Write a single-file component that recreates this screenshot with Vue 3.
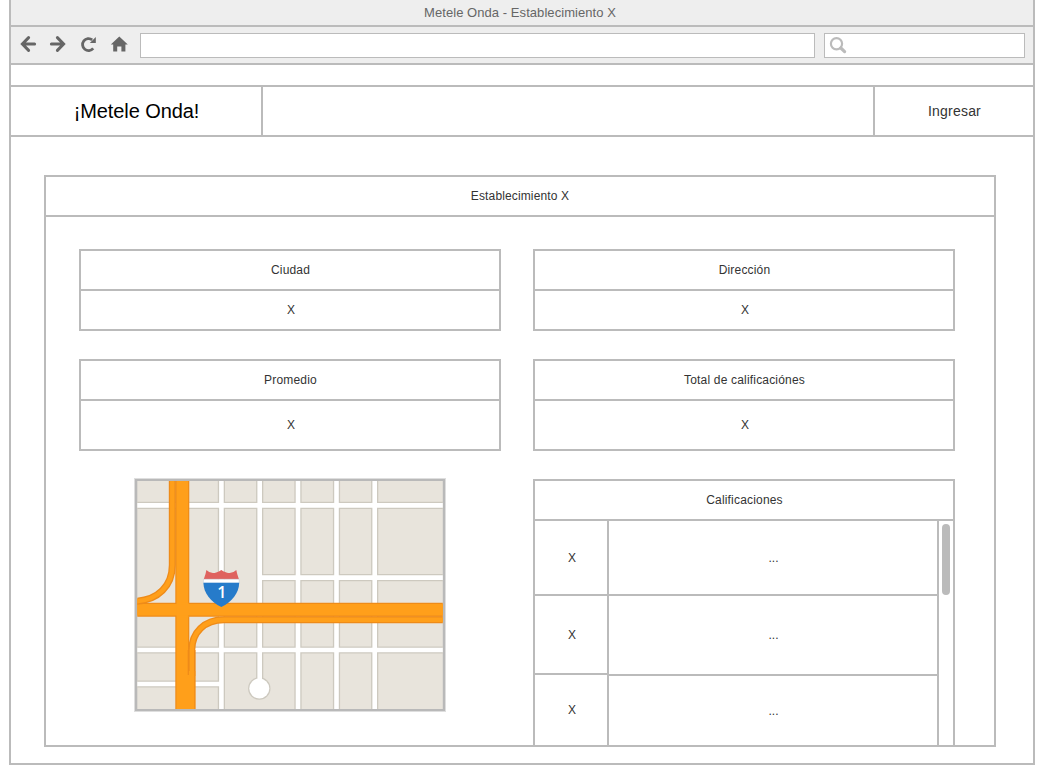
<script setup>
const cards = [
  { title: 'Ciudad', value: 'X' },
  { title: 'Dirección', value: 'X' },
  { title: 'Promedio', value: 'X', tall: true },
  { title: 'Total de calificaciónes', value: 'X', tall: true },
]
const scores = ['X', 'X', 'X']
const comments = ['...', '...', '...']
const streets =
  'M221.4 480V710 M259.7 480V688 M298 480V710 M336.5 480V710 M374.7 480V710 M136 505.4H444 M259.7 577.6H444 M136 650H444 M136 684H221.4'
const ramps =
  'M136 601.3C158 600 172.3 586 172.3 565V479 M191.8 676V650C191.8 633 204 619.8 224 619.8H444'
const mains = 'M182.3 479V710 M136 609.8H444'
</script>

<template>
  <div class="window">
    <div class="titlebar"><span class="title">Metele Onda - Establecimiento X</span></div>
    <div class="toolbar">
      <svg class="nav" width="112" height="20" viewBox="19 34 112 20">
        <g fill="none" stroke="#666" stroke-width="3">
          <path d="M28.6 37.6L22.4 44L28.6 50.4M22.8 44H34.6" stroke-linecap="round" />
          <path d="M57.4 37.6L63.6 44L57.4 50.4M63 44H51.4" stroke-linecap="round" />
          <path d="M93.2 48.4A6 6 0 1 1 92.2 39.8" stroke-width="2.8" />
        </g>
        <g fill="#666">
          <path d="M95.8 37V43H89.8Z" />
          <path d="M119.3 36.5L127.8 44.6H125.4V51.6H121.4V46.4H117.2V51.6H113.2V44.6H110.8Z" />
        </g>
      </svg>
      <div class="address"></div>
      <div class="search">
        <svg width="18" height="18" viewBox="829 36 18 18" fill="none" stroke="#bbb">
          <circle cx="836.5" cy="43.8" r="5.6" stroke-width="2.2" />
          <path d="M840.8 48L844.6 51.6" stroke-width="3.2" stroke-linecap="round" />
        </svg>
      </div>
    </div>
    <div class="spacer"></div>
    <header class="header">
      <div class="brand"><span>¡Metele Onda!</span></div>
      <div class="middle"></div>
      <div class="login"><span>Ingresar</span></div>
    </header>
    <main class="panel">
      <div class="panel-title">Establecimiento X</div>
      <div class="grid">
        <section v-for="c in cards" :key="c.title" class="card" :class="{ tall: c.tall }">
          <div class="card-title">{{ c.title }}</div>
          <div class="card-value">{{ c.value }}</div>
        </section>
        <svg class="map" width="312" height="234" viewBox="134 478 312 234">
          <rect x="134" y="478" width="312" height="234" fill="#dedede" />
          <rect x="135" y="479" width="310" height="232" fill="#b9b9b9" />
          <svg x="137.3" y="481" width="305.5" height="228" viewBox="137.3 481 305.5 228">
            <rect x="137" y="480" width="307" height="230" fill="#e8e4dc" />
            <g fill="none">
              <path :d="streets" stroke="#cdc9bf" stroke-width="7.2" />
              <circle cx="259.3" cy="688.5" r="11.2" fill="#cdc9bf" />
              <path :d="streets" stroke="#fff" stroke-width="4.6" />
              <circle cx="259.3" cy="688.5" r="10" fill="#fff" />
              <path :d="mains" stroke="#ee8b19" stroke-width="14" />
              <path :d="mains" stroke="#ff9f1a" stroke-width="11.6" />
              <path :d="ramps" stroke="#ee8b19" stroke-width="7" />
              <path :d="ramps" stroke="#ff9f1a" stroke-width="4.4" />
              <path d="M188 671V710H195.3V671Z" fill="#ff9f1a" />
              <path d="M188.3 650V675M194.9 650V710" stroke="#ee8b19" stroke-width="1.2" />
              <path d="M176.8 604.4H188V615.2H176.8Z" fill="#ff9f1a" />
              <path d="M181 603.5H188.6M181 616.5H188.6" stroke="#ff9f1a" stroke-width="1.6" />
            </g>
          </svg>
          <path d="M206.4 570Q211 574.6 216.2 572.4Q219 571.6 221.3 570Q223.6 571.6 226.4 572.4Q231.6 574.6 236.3 570Q237 574 239 579.6H203.7Q205.8 574 206.4 570Z" fill="#df625f" />
          <path d="M203.6 579.2H239L239.2 583H203.4Z" fill="#fff" stroke="#b9c9dc" stroke-width=".4" />
          <path d="M203.4 582.7H239.2C239 593 232 601.6 221.3 607C210.6 601.6 203.6 593 203.4 582.7Z" fill="#267bca" />
          <text x="221.8" y="598" text-anchor="middle" class="route">1</text>
        </svg>
        <section class="ratings">
          <div class="card-title">Calificaciones</div>
          <div class="rows">
            <div class="col scores"><div v-for="(s, i) in scores" :key="i" class="cell">{{ s }}</div></div>
            <div class="col comments"><div v-for="(s, i) in comments" :key="i" class="cell">{{ s }}</div></div>
            <div class="track"><div class="thumb"></div></div>
          </div>
        </section>
      </div>
    </main>
  </div>
</template>

<style>
body { background: #fff; overflow: hidden; }
</style>

<style scoped>
* { box-sizing: border-box; }
.window {
  width: 1026px; height: 765px; margin-left: 9px;
  border: 2px solid #bbb; border-top: 0; background: #fff;
  font: 12px/14px "Liberation Sans", Arial, sans-serif; color: #333;
}
.titlebar {
  height: 27px; background: #eee; border-bottom: 2px solid #bbb;
  display: flex; align-items: center; justify-content: center; padding-right: 4px;
  font-size: 13px; line-height: 15px; color: #666;
}
.title { letter-spacing: .06px; }
.toolbar {
  height: 38px; background: #eee; border-bottom: 2px solid #bbb;
  display: flex; align-items: center; padding: 0 8px;
}
.nav { flex: none; margin-right: 9px; margin-top: -2px; }
.address { width: 675px; height: 25px; border: 1px solid #bbb; background: #fff; }
.search {
  width: 201px; height: 25px; margin-left: 9px; border: 1px solid #bbb; background: #fff;
  display: flex; padding: 2px 0 0 4px;
}
.spacer { height: 20px; }
.header { display: flex; height: 52px; border: solid #bbb; border-width: 2px 0; }
.brand { width: 252px; border-right: 2px solid #bbb; font-size: 20px; line-height: 23px; color: #000; letter-spacing: -.08px; }
.middle { flex: 1; }
.login { width: 160px; border-left: 2px solid #bbb; font-size: 14px; line-height: 16px; letter-spacing: .2px; }
.brand, .login { display: flex; align-items: center; justify-content: center; padding-left: 1px; }
.panel { width: 952px; height: 572px; margin: 38px 0 0 33px; border: 2px solid #bbb; }
.panel-title { height: 40px; border-bottom: 2px solid #bbb; display: flex; align-items: center; justify-content: center; letter-spacing: .13px; }
.grid {
  display: grid; grid-template-columns: 422px 422px; column-gap: 32px;
  grid-template-rows: 82px 92px 266px; row-gap: 28px; padding: 32px 0 0 33px;
}
.card { height: 82px; border: 2px solid #bbb; }
.card.tall { height: 92px; }
.card-title { height: 40px; border-bottom: 2px solid #bbb; letter-spacing: .18px; padding-left: 1px; }
.card-value { height: 38px; padding-left: 2px; }
.tall .card-value { height: 48px; }
.card-title, .card-value, .cell { display: flex; align-items: center; justify-content: center; }
.map { display: block; margin: -1px 0 0 55px; }
.route { font: 600 16px "Open Sans", sans-serif; fill: #fff; }
.ratings { height: 266px; border: 2px solid #bbb; border-bottom: 0; }
.rows { display: flex; height: 224px; }
.scores { width: 74px; border-right: 2px solid #bbb; }
.comments { width: 330px; border-right: 2px solid #bbb; }
.cell { height: 75px; border-bottom: 2px solid #bbb; padding-left: 1px; }
.scores .cell { padding-left: 2px; }
.cell:nth-child(2) { height: 79px; }
.comments .cell:nth-child(2) { height: 80px; }
.cell:nth-child(3) { height: 70px; border-bottom: 0; }
.track { padding: 3px 0 0 3px; }
.thumb { width: 8px; height: 71px; border-radius: 4px; background: #bbb; }
</style>
